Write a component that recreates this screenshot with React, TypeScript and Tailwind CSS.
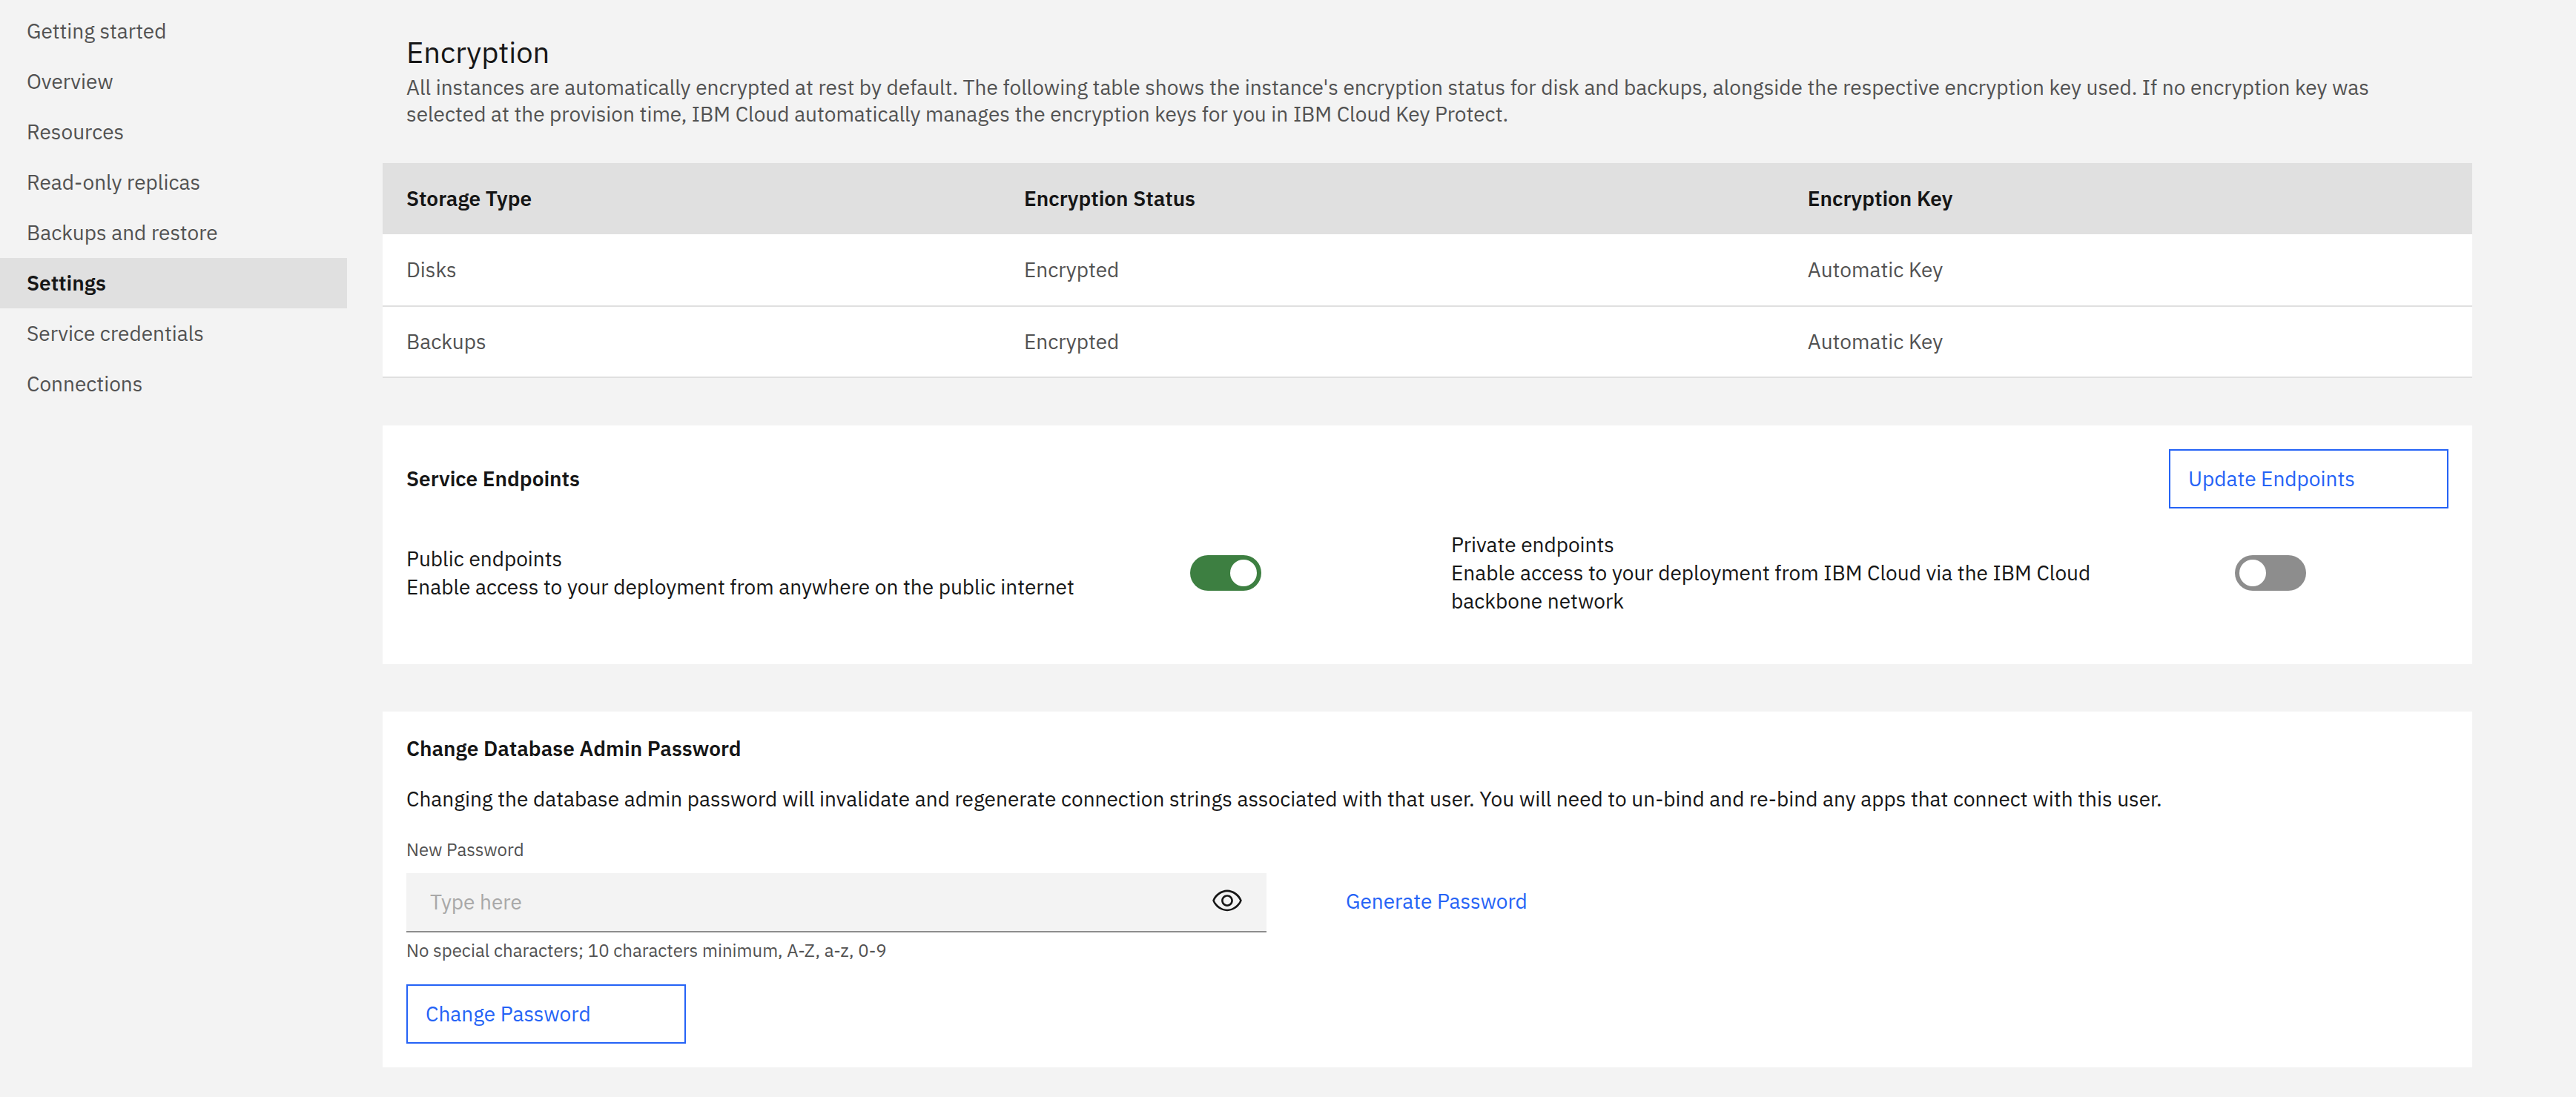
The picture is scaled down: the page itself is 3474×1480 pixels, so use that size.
import { useState } from "react";
import clsx from "clsx";

const navItems = [
  "Getting started",
  "Overview",
  "Resources",
  "Read-only replicas",
  "Backups and restore",
  "Settings",
  "Service credentials",
  "Connections",
];

const rows = [
  ["Disks", "Encrypted", "Automatic Key"],
  ["Backups", "Encrypted", "Automatic Key"],
];

function SideNav() {
  return (
    <nav aria-label="Service" className="w-[468px] shrink-0 pt-2">
      <ul>
        {navItems.map((item) => {
          const active = item === "Settings";
          return (
            <li key={item}>
              <a
                href="#"
                aria-current={active ? "page" : undefined}
                className={clsx(
                  "flex h-17 items-center px-9",
                  active ? "bg-[#e0e0e0] font-semibold text-[#161616]" : "text-[#525252]",
                )}
              >
                {item}
              </a>
            </li>
          );
        })}
      </ul>
    </nav>
  );
}

function EncryptionTable() {
  return (
    <div className="border-b-2 border-[#e0e0e0]">
      <table className="w-full table-fixed border-separate border-spacing-0 text-left">
        <colgroup>
          <col className="w-[29.56%]" />
          <col className="w-[37.5%]" />
          <col />
        </colgroup>
        <thead className="bg-[#e0e0e0] text-[#161616]">
          <tr>
            {["Storage Type", "Encryption Status", "Encryption Key"].map((h) => (
              <th key={h} scope="col" className="h-24 px-8 font-semibold">
                {h}
              </th>
            ))}
          </tr>
        </thead>
        <tbody className="bg-white text-[#525252]">
          {rows.map((row, i) => (
            <tr key={row[0]}>
              {row.map((cell) => (
                <td
                  key={cell}
                  className={clsx("h-24 px-8", i > 0 && "border-t-2 border-[#e0e0e0]")}
                >
                  {cell}
                </td>
              ))}
            </tr>
          ))}
        </tbody>
      </table>
    </div>
  );
}

function Toggle({ id, initial }: { id: string; initial: boolean }) {
  const [on, setOn] = useState(initial);
  return (
    <button
      type="button"
      role="switch"
      aria-checked={on}
      aria-labelledby={id}
      onClick={() => setOn(!on)}
      className={clsx(
        "flex h-12 w-24 items-center rounded-full p-1.5",
        on ? "justify-end bg-[#3d7f41]" : "justify-start bg-[#8d8d8d]",
      )}
    >
      <span className="size-9 rounded-full bg-white" />
    </button>
  );
}

function Endpoint({ id, title, text, on }: { id: string; title: string; text: string; on: boolean }) {
  return (
    <div className="grid grid-cols-4 items-center">
      <div className="col-span-3 pr-16 pl-8 leading-[38px]">
        <p id={id}>{title}</p>
        <p>{text}</p>
      </div>
      <div className="px-8">
        <Toggle id={id} initial={on} />
      </div>
    </div>
  );
}

function OutlineButton({ children }: { children: string }) {
  return (
    <button
      type="button"
      className="h-20 w-[377px] border-2 border-[#2563f6] px-6 text-left text-[#2563f6]"
    >
      {children}
    </button>
  );
}

function EyeIcon() {
  return (
    <svg viewBox="0 0 16 16" className="size-[42px]" fill="currentColor" aria-hidden="true">
      <path d="M15.5 7.8C14.3 4.7 11.3 2.6 8 2.5 4.7 2.6 1.7 4.7.5 7.8v.3c1.2 3.1 4.1 5.2 7.5 5.3 3.3-.1 6.3-2.2 7.5-5.3v-.3zM8 12.5c-2.7 0-5.4-2-6.5-4.5 1-2.5 3.8-4.5 6.5-4.5s5.4 2 6.5 4.5c-1.1 2.5-3.9 4.5-6.5 4.5z" />
      <path d="M8 5C6.3 5 5 6.3 5 8s1.3 3 3 3 3-1.3 3-3-1.3-3-3-3zm0 5c-1.1 0-2-.9-2-2s.9-2 2-2 2 .9 2 2-.9 2-2 2z" />
    </svg>
  );
}

function PasswordCard() {
  const [visible, setVisible] = useState(false);
  return (
    <section className="bg-white p-8">
      <h2 className="font-semibold">Change Database Admin Password</h2>
      <p className="mt-8">
        Changing the database admin password will invalidate and regenerate connection strings
        associated with that user. You will need to un-bind and re-bind any apps that connect with
        this user.
      </p>
      <label htmlFor="new-password" className="mt-8 mb-3.5 block text-[24px] text-[#525252]">
        New Password
      </label>
      <div className="flex items-center gap-20">
        <div className="flex h-20 w-[1160px] items-start border-b-2 border-[#8d8d8d] bg-[#f3f3f3]">
          <input
            id="new-password"
            type={visible ? "text" : "password"}
            placeholder="Type here"
            aria-describedby="password-help"
            className="h-full min-w-0 flex-1 px-8 pb-0.5 outline-none placeholder:text-[#a8a8a8]"
          />
          <button
            type="button"
            aria-label="Show password"
            onClick={() => setVisible(!visible)}
            className="px-8 py-4"
          >
            <EyeIcon />
          </button>
        </div>
        <button type="button" className="h-20 px-[27px] pb-1 text-[#2563f6]">
          Generate Password
        </button>
      </div>
      <p id="password-help" className="mt-2 mb-[30px] text-[24px] leading-8 text-[#525252]">
        No special characters; 10 characters minimum, A-Z, a-z, 0-9
      </p>
      <OutlineButton>Change Password</OutlineButton>
    </section>
  );
}

export default function App() {
  return (
    <div className="flex min-h-screen bg-[#f3f3f3] font-['IBM_Plex_Sans','Roboto',sans-serif] text-[28px] leading-9 text-[#161616]">
      <SideNav />
      <main className="min-w-0 flex-1 pt-[42px] pr-[140px] pb-10 pl-12">
        <header className="mb-12 px-8">
          <h1 className="mb-0.5 text-[40px] leading-14">Encryption</h1>
          <p className="text-[#525252]">
            All instances are automatically encrypted at rest by default. The following table shows
            the instance's encryption status for disk and backups, alongside the respective
            encryption key used. If no encryption key was selected at the provision time, IBM Cloud
            automatically manages the encryption keys for you in IBM Cloud Key Protect.
          </p>
        </header>
        <EncryptionTable />
        <section className="my-16 bg-white pt-8 pb-[66px]">
          <div className="mb-[30px] flex items-center justify-between px-8">
            <h2 className="font-semibold">Service Endpoints</h2>
            <OutlineButton>Update Endpoints</OutlineButton>
          </div>
          <div className="grid grid-cols-2">
            <Endpoint
              id="public"
              title="Public endpoints"
              text="Enable access to your deployment from anywhere on the public internet"
              on
            />
            <Endpoint
              id="private"
              title="Private endpoints"
              text="Enable access to your deployment from IBM Cloud via the IBM Cloud backbone network"
              on={false}
            />
          </div>
        </section>
        <PasswordCard />
      </main>
    </div>
  );
}
